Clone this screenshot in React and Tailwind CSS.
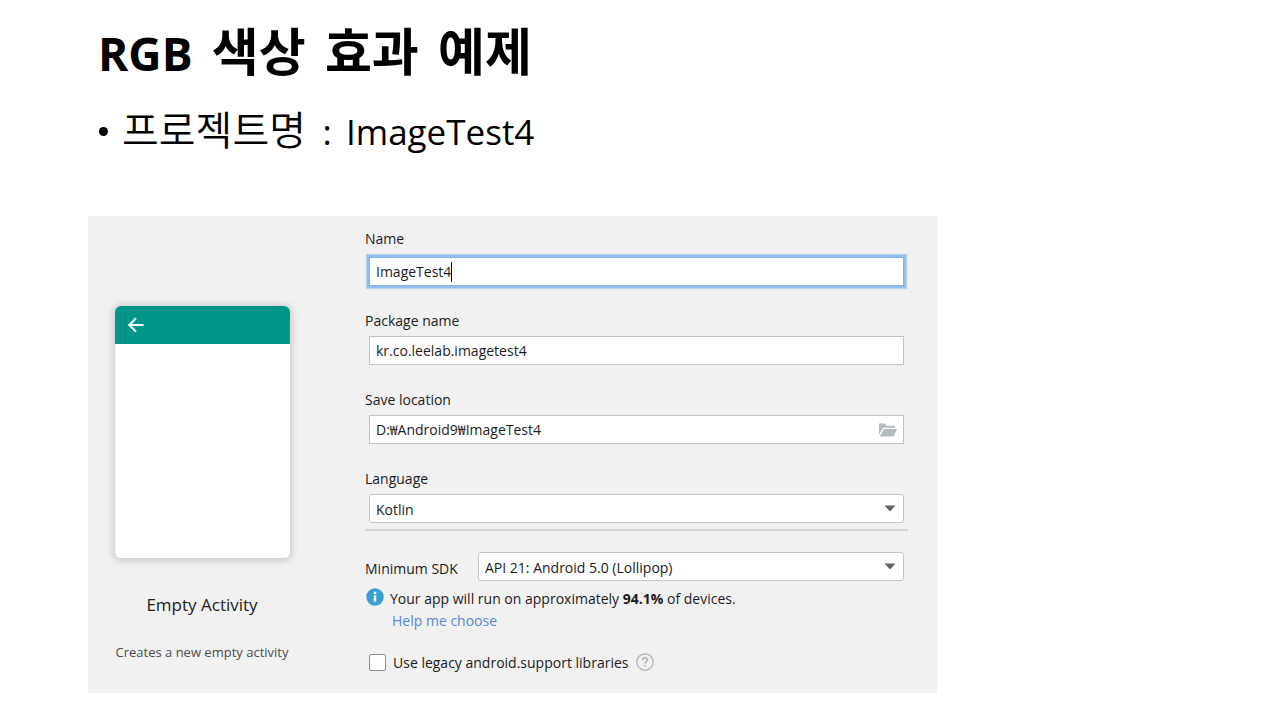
import { useState } from "react";

function TextField({ id, label, value, children }) {
  const [text, setText] = useState(value);
  return (
    <div className="flex flex-col gap-[5px]">
      <label htmlFor={id} className="leading-5">{label}</label>
      <div className="mx-1 flex h-[29px] items-center border border-[#c4c4c4] bg-white px-1.5">
        <input
          id={id}
          value={text}
          onChange={(e) => setText(e.target.value)}
          className="min-w-0 flex-1 bg-transparent leading-5 outline-none"
        />
        {children}
      </div>
    </div>
  );
}

function NameField() {
  const [text, setText] = useState("ImageTest4");
  return (
    <div className="flex flex-col gap-2">
      <label htmlFor="name" className="leading-5">Name</label>
      <div className="mx-1 flex h-[29px] items-center border border-[#84b0e6] bg-white px-1.5 shadow-[0_0_1px_3px_rgba(147,191,240,0.6)] ring-2 ring-[#93bff0]">
        <input
          id="name"
          value={text}
          onChange={(e) => setText(e.target.value)}
          className="bg-transparent leading-5 outline-none [field-sizing:content]"
        />
        <span className="h-5 w-px bg-black" />
      </div>
    </div>
  );
}

function SelectBox({ id, option }) {
  return (
    <div className="relative mr-1 flex-1">
      <select
        id={id}
        className="block h-[29px] w-full appearance-none rounded-[3px] border border-[#c4c4c4] bg-white pl-1.5 pr-8 pt-0.5 outline-none"
      >
        <option>{option}</option>
      </select>
      <svg viewBox="0 0 12 7" className="pointer-events-none absolute right-2 top-[11px] h-[7px] w-3" aria-hidden="true">
        <path d="M0.5 0.5h11L6 6.5z" fill="#5f6162" />
      </svg>
    </div>
  );
}

function FolderIcon() {
  return (
    <svg viewBox="0 0 18 14" className="h-3.5 w-[18px]" fill="#b4bcc0">
      <path d="M0 0.5h6l1.5 2.2H16v2H4.2L0 11.5z" />
      <path d="M4.8 6H18l-3.4 7.5H0.8z" />
    </svg>
  );
}

export default function App() {
  const [legacy, setLegacy] = useState(false);
  return (
    <main className="min-h-screen bg-white px-[88px] pb-7 pt-[18px] font-['Open_Sans','Noto_Sans_CJK_KR',sans-serif] text-black">
      <h1 className="pl-2.5 text-[51px] font-bold leading-[66px]">
        <span className="mr-1.5 text-[46px]">RGB</span> <span className="mr-1.5">색상</span>{" "}
        <span className="mr-1.5">효과</span> <span>예제</span>
      </h1>
      <ul className="pl-[11px] pt-[18px]">
        <li className="flex items-center gap-3.5 text-[40px] font-[350] leading-[52px]">
          <span className="h-[9px] w-[9px] rounded-full bg-black" />
          <span>
            <span className="mr-1.5">프로젝트명</span> <span className="mr-1 text-[35px] font-normal">:</span>{" "}
            <span className="text-[35px] font-normal">ImageTest4</span>
          </span>
        </li>
      </ul>

      <form className="mt-[58px] flex w-full max-w-[849px] bg-[#f1f1f1] pb-5 pr-[29px] text-[14px] text-[#1c1c1c]">
        <section className="flex w-[228px] shrink-0 flex-col items-center pt-[90px]">
          <div className="h-[252px] w-[175px] overflow-hidden rounded-[6px] bg-white shadow-[0_1px_7px_2px_rgba(0,0,0,0.16)]">
            <div className="flex h-[38px] items-center bg-[#009688] pl-3">
              <svg viewBox="0 0 18 16" className="h-4 w-[18px]" fill="none" stroke="#fff" strokeWidth="2">
                <path d="M16.5 8H2.5M9 1.2L2.2 8L9 14.8" />
              </svg>
            </div>
          </div>
          <h2 className="mt-[35px] text-[17px] leading-6">Empty Activity</h2>
          <p className="mt-[25px] text-[13px] leading-5 text-[#4c4c4c]">Creates a new empty activity</p>
        </section>

        <section className="ml-[49px] min-w-0 flex-1 pt-[13px]">
          <div className="flex flex-col gap-[25px]">
            <NameField />
            <TextField id="package" label="Package name" value="kr.co.leelab.imagetest4" />
            <TextField id="location" label="Save location" value="D:₩Android9₩ImageTest4">
              <button type="button" aria-label="Browse">
                <FolderIcon />
              </button>
            </TextField>
            <div className="flex flex-col gap-[5px]">
              <label htmlFor="language" className="leading-5">Language</label>
              <div className="ml-1 flex">
                <SelectBox id="language" option="Kotlin" />
              </div>
            </div>
          </div>
          <hr className="mt-1.5 border-t-2 border-[#d4d4d4]" />

          <div className="mt-[21px] flex items-center">
            <label htmlFor="sdk" className="w-[113px] pt-1 leading-5">Minimum SDK</label>
            <SelectBox id="sdk" option="API 21: Android 5.0 (Lollipop)" />
          </div>
          <div className="mt-[7px] flex items-center gap-1.5 pl-px">
            <svg viewBox="0 0 18 18" className="mb-1 h-[18px] w-[18px]">
              <circle cx="9" cy="9" r="8.7" fill="#389fd6" />
              <path d="M7.8 3.7h2.4v2.2H7.8zM7.8 7.2h2.4v6.6H7.8z" fill="#fff" />
            </svg>
            <p className="leading-5">
              Your app will run on approximately <b className="font-bold">94.1%</b> of devices.
            </p>
          </div>
          <a href="#help" className="ml-[27px] mt-px block leading-5 text-[#5c87cf]">Help me choose</a>
          <div className="mt-5 flex items-center">
            <input
              id="legacy"
              type="checkbox"
              checked={legacy}
              onChange={(e) => setLegacy(e.target.checked)}
              className="ml-1 h-[17px] w-[17px] appearance-none rounded-[2px] border border-[#8f8f8f] bg-white checked:bg-[#389fd6]"
            />
            <label htmlFor="legacy" className="ml-[7px] pt-0.5 leading-5">Use legacy android.support libraries</label>
            <button type="button" aria-label="Help" className="ml-2">
              <svg viewBox="0 0 18 18" className="h-[18px] w-[18px]" fill="none" stroke="#adb3b6">
                <circle cx="9" cy="9" r="8.2" strokeWidth="1.2" />
                <path d="M6.6 7.2C6.6 5.6 7.6 4.7 9 4.7s2.4 0.9 2.4 2.2c0 1.7-2.3 1.8-2.3 3.7M9.1 11.9v1.7" strokeWidth="1.6" />
              </svg>
            </button>
          </div>
        </section>
      </form>
    </main>
  );
}
